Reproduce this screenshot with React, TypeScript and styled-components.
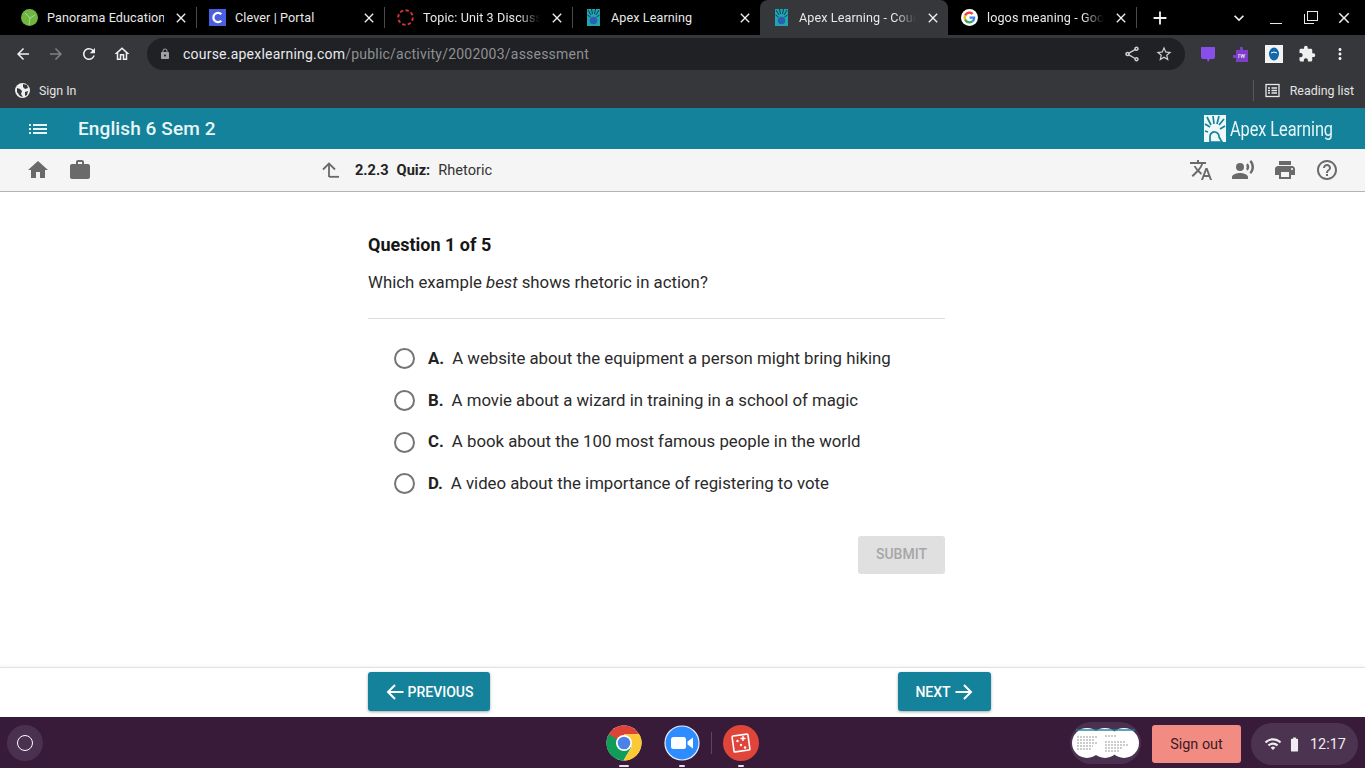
import React from "react";
import styled, { createGlobalStyle } from "styled-components";
import {
  MdArrowBack, MdArrowForward, MdRefresh, MdOutlineHome, MdLock, MdOutlineShare, MdStarBorder,
  MdExtension, MdMoreVert, MdClose, MdAdd, MdExpandMore, MdHome, MdWork, MdTranslate,
  MdRecordVoiceOver, MdPrint, MdHelpOutline, MdList, MdWifi, MdBatteryStd,
} from "react-icons/md";

const Global = createGlobalStyle`
  html, body { margin: 0; padding: 0; background: #fff; }
  * { box-sizing: border-box; }
  body { font-family: Roboto, "Liberation Sans", sans-serif; }
`;

const Page = styled.div`
  width: 1365px; height: 768px; display: flex; flex-direction: column; overflow: hidden;
`;

/* ---------- tab strip ---------- */
const TabStrip = styled.div`
  height: 35px; background: #000; display: flex; align-items: stretch; padding-left: 8px; color: #fff; flex: none;
`;
const Tab = styled.div<{ $active?: boolean; $sep?: boolean }>`
  width: 188px; height: 35px; display: flex; align-items: center; padding: 0 7px 0 13px; gap: 9px; position: relative;
  background: ${(p) => (p.$active ? "#36373a" : "transparent")};
  border-radius: ${(p) => (p.$active ? "8px 8px 0 0" : "0")};
  &::after {
    content: ""; display: ${(p) => (p.$sep ? "block" : "none")};
    position: absolute; right: -1px; top: 7px; width: 1px; height: 21px; background: #4a4a4c;
  }
`;
const FavSlot = styled.span`
  width: 17px; height: 17px; flex: none; display: block;
  svg { display: block; }
`;
const TabTitle = styled.span<{ $fade?: boolean }>`
  flex: 1; font-size: 12.6px; color: #e8e8e8; white-space: nowrap; overflow: hidden; letter-spacing: 0.1px;
  ${(p) => (p.$fade ? "mask-image: linear-gradient(90deg,#000 82%,transparent 100%);" : "")}
`;
const TabClose = styled(MdClose)`
  width: 16px; height: 16px; color: #f0f0f0; flex: none;
`;
const StripRight = styled.div`
  flex: 1; display: flex; align-items: center; padding-left: 13px; color: #f2f2f2;
`;
const NewTab = styled(MdAdd)`
  width: 22px; height: 22px; margin-right: 58px;
`;
const TabSearch = styled(MdExpandMore)`
  width: 20px; height: 20px; margin-right: 21px;
`;
const WinButtons = styled.div`
  display: flex; align-items: center; gap: 19px;
`;
const WinMin = styled.span`
  display: block; width: 12px; height: 1.5px; background: #e8e8e8; margin-top: 12px;
`;
const WinMax = styled.span`
  display: block; width: 13px; height: 13px; position: relative; margin-left: 3px;
  &::before { content: ""; position: absolute; left: 3px; top: 0; width: 9px; height: 8px; border: 1.4px solid #e8e8e8; }
  &::after { content: ""; position: absolute; left: 0; top: 3px; width: 9px; height: 9px; border-left: 1.4px solid #e8e8e8; border-bottom: 1.4px solid #e8e8e8; }
`;
const WinX = styled(MdClose)`
  width: 18px; height: 18px; margin-left: -1px; color: #eee;
`;

/* ---------- toolbar ---------- */
const Toolbar = styled.div`
  height: 37px; background: #36373a; display: flex; align-items: center; padding: 0 0 0 14px; flex: none;
`;
const NavIcon = styled.span<{ $dim?: boolean }>`
  width: 18px; height: 18px; margin-right: 15px; color: ${(p) => (p.$dim ? "#808185" : "#f0f0f0")}; display: flex;
  svg { width: 18px; height: 18px; }
`;
const Omnibox = styled.div`
  width: 1038px; height: 32px; margin-left: 1px; margin-top: 1px; border-radius: 16px; background: #202124; display: flex; align-items: center; padding: 0 12px 0 12px;
`;
const LockIcon = styled(MdLock)`
  width: 12px; height: 12px; color: #a0a1a5; margin-right: 12px;
`;
const Url = styled.span`
  flex: 1; font-size: 14px; color: #e8eaed; letter-spacing: 0.22px;
  span { color: #8e9094; }
`;
const OmniIcon = styled.span`
  color: #d0d1d4; display: flex; margin-left: 14px;
  svg { width: 18px; height: 18px; }
`;
const ExtRow = styled.div`
  display: flex; align-items: center; gap: 15px; margin-left: 14px;
`;
const Ext = styled.span`
  width: 18px; height: 18px; display: flex; color: #f0f0f0;
  svg { width: 18px; height: 18px; display: block; }
`;

/* ---------- bookmarks ---------- */
const Bookmarks = styled.div`
  height: 36px; background: #36373a; display: flex; align-items: center; justify-content: space-between; padding: 0 11px 0 15px; flex: none; color: #e4e4e4; font-size: 12.4px;
`;
const BookItem = styled.div`
  display: flex; align-items: center; gap: 9px;
`;
const Reading = styled.div`
  display: flex; align-items: center; gap: 10px; border-left: 1px solid #58595c; height: 21px; padding-left: 11px;
`;

/* ---------- app header ---------- */
const AppBar = styled.div`
  height: 41px; background: #14829b; display: flex; align-items: center; justify-content: space-between; padding: 0 26px 0 26px; flex: none; color: #fff;
`;
const AppLeft = styled.div`
  display: flex; align-items: center; gap: 28px;
`;
const CourseTitle = styled.div`
  font-size: 19px; font-weight: 500; color: #e9f6f8; letter-spacing: 0.1px;
`;
const MenuIcon = styled(MdList)`
  width: 24px; height: 24px; color: #e8f3f6;
`;
const Logo = styled.div`
  display: flex; align-items: center; gap: 4px; color: #e6f5f7;
`;
const LogoText = styled.span`
  display: inline-block; width: 109px; font-size: 21px; white-space: nowrap; transform: scaleX(0.78); transform-origin: left center; letter-spacing: -0.1px;
`;

const SubBar = styled.div`
  height: 43px; background: #f5f5f5; display: flex; align-items: center; flex: none; padding: 0 26px; color: #6a6a6a;
  border-bottom: 1px solid #b5b5b5; box-shadow: 0 1px 2px rgba(0,0,0,.12);
`;
const SubIcons = styled.div`
  display: flex; align-items: center; gap: 18px;
`;
const SubIconSlot = styled.span`
  width: 24px; height: 24px; display: flex;
  svg { width: 24px; height: 24px; display: block; }
`;
const Crumb = styled.div`
  display: flex; align-items: center; margin-left: 228px; font-size: 14.6px; color: #222; flex: 1;
  svg { margin-right: 15px; }
  b { font-weight: 700; margin-right: 8px; }
  span { margin-left: 0; color: #333; }
`;

/* ---------- main ---------- */
const Main = styled.main`
  flex: 1; background: #fff; padding: 41px 0 0 368px;
`;
const Column = styled.div`
  width: 577px; display: flex; flex-direction: column;
`;
const QTitle = styled.h2`
  margin: 0; font-size: 18px; line-height: 24px; font-weight: 700; color: #161616;
`;
const Prompt = styled.p`
  margin: 13px 0 0; font-size: 16.8px; line-height: 24px; color: #2a2a2a; padding-bottom: 24px; border-bottom: 1px solid #dcdcdc;
  em { font-style: italic; }
`;
const Options = styled.div`
  display: flex; flex-direction: column; padding: 18px 0 0 26px;
`;
const Option = styled.label`
  height: 41.7px; display: flex; align-items: center; font-size: 16.8px; color: #2a2a2a;
  b { font-weight: 700; margin-left: 13px; margin-right: 8px; color: #222; }
`;
const Radio = styled.span`
  width: 21px; height: 21px; border-radius: 50%; border: 2px solid #757575; background: #fff; margin-top: 2px; flex: none;
`;
const SubmitRow = styled.div`
  display: flex; justify-content: flex-end; margin-top: 32px;
`;
const Submit = styled.button`
  width: 87px; height: 38px; border: 0; border-radius: 3px; background: #e0e0e0; color: #a6a6a6; font: 500 14px Roboto, sans-serif; padding: 0 0 2px;
`;

const Footer = styled.footer`
  height: 50px; flex: none; background: #fff; border-top: 1px solid #e2e2e2; box-shadow: 0 -1px 3px rgba(0,0,0,.05); padding: 4px 374px 0 368px; display: flex; justify-content: space-between; align-items: flex-start;
`;
const NavButton = styled.button<{ $w: number }>`
  width: ${(p) => p.$w}px; height: 39px; border: 0; border-radius: 3px; background: #14829b; color: #fff; font: 500 14px Roboto, sans-serif; display: flex; align-items: center; justify-content: center; gap: 3px; padding: 0; box-shadow: 0 1px 3px rgba(0,0,0,.35);
  svg { width: 20px; height: 20px; }
`;

/* ---------- shelf ---------- */
const Shelf = styled.div`
  height: 51px; flex: none; background: #371b38; display: grid; grid-template-columns: 1fr auto 1fr; align-items: center; padding: 0 7px 0 7px;
`;
const Launcher = styled.div`
  width: 36px; height: 36px; border-radius: 50%; background: #4a3150; display: flex; align-items: center; justify-content: center; justify-self: start;
  &::after { content: ""; width: 14px; height: 14px; border-radius: 50%; border: 1.7px solid #fff; }
`;
const Apps = styled.div`
  display: flex; align-items: center; position: relative;
`;
const AppIcon = styled.div<{ $mr: number; $bar: number }>`
  width: 36px; height: 36px; margin-right: ${(p) => p.$mr}px; position: relative;
  svg { display: block; }
  &::after { content: ""; position: absolute; left: 50%; bottom: -6px; width: ${(p) => p.$bar}px; height: 2px; margin-left: ${(p) => -p.$bar / 2}px; background: #e8e0e8; border-radius: 1px; }
`;
const ShelfDivider = styled.span`
  width: 1px; height: 22px; background: #5b4560; margin-right: 11px;
`;
const ShelfRight = styled.div`
  display: flex; align-items: center; justify-content: flex-end;
`;
const Thumbs = styled.div`
  width: 71px; height: 42px; border-radius: 21px; background: #4a3150; display: flex; align-items: center; justify-content: center; margin-right: 11px;
`;
const SignOut = styled.div`
  width: 89px; height: 38px; border-radius: 3px; background: #f28b82; color: #3c1a22; font-size: 14.4px; display: flex; align-items: center; justify-content: center; margin-right: 10px; margin-top: 3px;
`;
const Tray = styled.div`
  width: 107px; height: 42px; border-radius: 21px; background: #4c3450; color: #f1ecf1; display: flex; align-items: center; padding-left: 13px; font-size: 14.4px; margin-top: 3px;
`;

const ApexFav = () => (
  <svg width="17" height="17" viewBox="0 0 17 17">
    <rect x="2" y="0" width="13" height="17" fill="#1fa6b0" />
    <path d="M3 1l3 5M6.5 0l1 5M10.5 0l-1 5M14 1l-3 5M2.5 6l3 2M14.5 6l-3 2" stroke="#0f3a52" strokeWidth="1" />
    <circle cx="8.5" cy="11.5" r="3.8" fill="#2d5fb0" />
  </svg>
);

const GoogleG = () => (
  <svg width="17" height="17" viewBox="0 0 48 48">
    <circle cx="24" cy="24" r="24" fill="#fff" />
    <g transform="translate(7 7) scale(.71)">
      <path fill="#EA4335" d="M24 9.5c3.5 0 6.6 1.2 9.1 3.6l6.8-6.8C35.8 2.4 30.3 0 24 0 14.6 0 6.5 5.4 2.6 13.2l7.9 6.2C12.4 13.7 17.7 9.5 24 9.5z" />
      <path fill="#4285F4" d="M46.9 24.5c0-1.6-.1-3.1-.4-4.5H24v9h12.9c-.6 3-2.2 5.5-4.7 7.2l7.7 6c4.4-4.1 7-10.2 7-17.7z" />
      <path fill="#FBBC05" d="M10.5 28.6c-.5-1.4-.8-3-.8-4.6s.3-3.2.8-4.6l-7.9-6.2C.9 16.5 0 20.1 0 24s.9 7.5 2.6 10.8l7.9-6.2z" />
      <path fill="#34A853" d="M24 48c6.5 0 11.9-2.1 15.9-5.8l-7.7-6c-2.1 1.4-4.9 2.3-8.2 2.3-6.3 0-11.6-4.2-13.5-9.9l-7.9 6.2C6.5 42.6 14.6 48 24 48z" />
    </g>
  </svg>
);

const UpTurn = () => (
  <svg width="20" height="20" viewBox="0 0 20 20" fill="none" stroke="#6a6a6a" strokeWidth="1.8">
    <path d="M9 17V4" />
    <path d="M3 9.5L9 3.5l6 6" />
    <path d="M9 16.8h10" />
  </svg>
);

const BackArrow = () => (
  <svg viewBox="0 0 20 20" fill="none" stroke="#fff" strokeWidth="2">
    <path d="M18.5 10H3" /><path d="M10 3l-7 7 7 7" />
  </svg>
);
const NextArrow = () => (
  <svg viewBox="0 0 20 20" fill="none" stroke="#fff" strokeWidth="2">
    <path d="M1.5 10H17" /><path d="M10 3l7 7-7 7" />
  </svg>
);

const tabs = [
  { title: "Panorama Education", fav: (
    <svg width="17" height="17" viewBox="0 0 17 17"><circle cx="8.5" cy="8.5" r="8.5" fill="#6fb53f" /><path d="M9 9L4 4M9 9l5-3M9 9l-1 7" stroke="#a9d78c" strokeWidth="1" /></svg>
  ) },
  { title: "Clever | Portal", fav: (
    <svg width="17" height="17" viewBox="0 0 17 17"><rect width="17" height="17" fill="#4a5fe0" /><path d="M12.3 5.3A4.6 4.6 0 1 0 12.3 11.7" fill="none" stroke="#fff" strokeWidth="2.2" /></svg>
  ) },
  { title: "Topic: Unit 3 Discussi", fade: true, fav: (
    <svg width="17" height="17" viewBox="0 0 17 17"><circle cx="8.5" cy="8.5" r="7.3" fill="none" stroke="#d9343a" strokeWidth="1.9" strokeDasharray="3.4 2.3" /></svg>
  ) },
  { title: "Apex Learning", fav: <ApexFav /> },
  { title: "Apex Learning - Cours", fade: true, fav: <ApexFav />, active: true },
  { title: "logos meaning - Goog", fade: true, fav: <GoogleG /> },
];

const options = [
  ["A.", "A website about the equipment a person might bring hiking"],
  ["B.", "A movie about a wizard in training in a school of magic"],
  ["C.", "A book about the 100 most famous people in the world"],
  ["D.", "A video about the importance of registering to vote"],
];

export default function App() {
  return (
    <Page>
      <Global />
      <TabStrip>
        {tabs.map((t, i) => (
          <Tab key={t.title} $active={t.active} $sep={!t.active && i !== 3}>
            <FavSlot>{t.fav}</FavSlot>
            <TabTitle $fade={t.fade}>{t.title}</TabTitle>
            <TabClose />
          </Tab>
        ))}
        <StripRight>
          <NewTab />
          <TabSearch />
          <WinButtons>
            <WinMin />
            <WinMax />
            <WinX />
          </WinButtons>
        </StripRight>
      </TabStrip>

      <Toolbar>
        <NavIcon><MdArrowBack /></NavIcon>
        <NavIcon $dim><MdArrowForward /></NavIcon>
        <NavIcon><MdRefresh /></NavIcon>
        <NavIcon><MdOutlineHome /></NavIcon>
        <Omnibox>
          <LockIcon />
          <Url>course.apexlearning.com<span>/public/activity/2002003/assessment</span></Url>
          <OmniIcon><MdOutlineShare /></OmniIcon>
          <OmniIcon><MdStarBorder /></OmniIcon>
        </Omnibox>
        <ExtRow>
          <Ext>
            <svg viewBox="0 0 18 18"><path d="M2 2h14v10q0 2-2 2h-3l-2 3-1-3H4q-2 0-2-2z" fill="#8a4fe8" /></svg>
          </Ext>
          <Ext>
            <svg viewBox="0 0 18 18"><path d="M4 5h4V2h3v3h5v12H4v-4H1v-3h3z" fill="#7d3fc9" /><text x="6" y="13" fontSize="6.5" fontFamily="Roboto" fill="#fff">rw</text></svg>
          </Ext>
          <Ext>
            <svg viewBox="0 0 18 18"><rect width="18" height="18" fill="#f2f2f2" /><ellipse cx="9" cy="9" rx="5" ry="6.5" fill="#1268a8" /><path d="M6 8q3-2 6 0" stroke="#fff" fill="none" /></svg>
          </Ext>
          <Ext><MdExtension /></Ext>
          <Ext><MdMoreVert /></Ext>
        </ExtRow>
      </Toolbar>

      <Bookmarks>
        <BookItem>
          <svg width="15" height="15" viewBox="0 0 15 15"><circle cx="7.5" cy="7.5" r="7.5" fill="#eee" /><path d="M2 5l3 1 2 2-1 3 2 3-3-1-3-4zM8 1l4 1 1 3-3 1-2-2zM10 9l3-1-1 4-2 1z" fill="#36373a" /></svg>
          Sign In
        </BookItem>
        <Reading>
          <svg width="15" height="15" viewBox="0 0 15 15" fill="none" stroke="#e8e8e8" strokeWidth="1.3"><rect x="1" y="1.5" width="13" height="12" /><path d="M3 5h2M6.5 5H12M3 7.5h2M6.5 7.5H12M3 10h2M6.5 10H12" /></svg>
          Reading list
        </Reading>
      </Bookmarks>

      <AppBar>
        <AppLeft>
          <MenuIcon />
          <CourseTitle>English 6 Sem 2</CourseTitle>
        </AppLeft>
        <Logo>
          <svg width="22" height="27" viewBox="0 0 22 27">
            <rect width="22" height="27" fill="#eef8f9" />
            <path d="M3 2l4 8M9 1l1 8M15 1l-2 8M20 4l-5 6M1 9l5 3M21 11l-5 3M1 16l3 1" stroke="#14829b" strokeWidth="1.7" />
            <path d="M6 27v-6a4.5 4.5 0 1 1 9 1l3 5z" fill="none" stroke="#14829b" strokeWidth="1.7" />
          </svg>
          <LogoText>Apex Learning</LogoText>
        </Logo>
      </AppBar>

      <SubBar>
        <SubIcons>
          <SubIconSlot><MdHome /></SubIconSlot>
          <SubIconSlot><MdWork /></SubIconSlot>
        </SubIcons>
        <Crumb>
          <UpTurn />
          <b>2.2.3</b><b>Quiz:</b><span>Rhetoric</span>
        </Crumb>
        <SubIcons>
          <SubIconSlot><MdTranslate /></SubIconSlot>
          <SubIconSlot><MdRecordVoiceOver /></SubIconSlot>
          <SubIconSlot><MdPrint /></SubIconSlot>
          <SubIconSlot><MdHelpOutline /></SubIconSlot>
        </SubIcons>
      </SubBar>

      <Main>
        <Column>
          <QTitle>Question 1 of 5</QTitle>
          <Prompt>Which example <em>best</em> shows rhetoric in action?</Prompt>
          <Options>
            {options.map(([k, v]) => (
              <Option key={k}>
                <Radio />
                <b>{k}</b>
                {v}
              </Option>
            ))}
          </Options>
          <SubmitRow><Submit>SUBMIT</Submit></SubmitRow>
        </Column>
      </Main>

      <Footer>
        <NavButton $w={122}><BackArrow />PREVIOUS</NavButton>
        <NavButton $w={93}>NEXT<NextArrow /></NavButton>
      </Footer>

      <Shelf>
        <Launcher />
        <Apps>
          <AppIcon $mr={22} $bar={10}>
            <svg width="36" height="36" viewBox="0 0 36 36">
              <circle cx="18" cy="18" r="17.5" fill="#fff" />
              <path d="M18 .5A17.5 17.5 0 0 1 33.2 9.3L18 9.5z" fill="#db4437" />
              <path d="M18 .5A17.5 17.5 0 0 0 2.8 9.3l7.6 13.2L18 9.5z" fill="#db4437" />
              <path d="M2.8 9.3A17.5 17.5 0 0 0 17.5 35.5l7.7-13z" fill="#0f9d58" />
              <path d="M33.2 9.3H18l7.6 13.1-8.1 13.1A17.5 17.5 0 0 0 33.2 9.3z" fill="#fcc934" />
              <circle cx="18" cy="18" r="8" fill="#fff" />
              <circle cx="18" cy="18" r="6.3" fill="#4c82e8" />
            </svg>
          </AppIcon>
          <AppIcon $mr={11} $bar={6}>
            <svg width="36" height="36" viewBox="0 0 36 36">
              <circle cx="18" cy="18" r="17" fill="#2d8cff" stroke="#e8f0ff" strokeWidth="1.2" />
              <rect x="7" y="12" width="15" height="12" rx="2.5" fill="#fff" />
              <path d="M23.5 16.5l5.5-4v11l-5.5-4z" fill="#fff" />
            </svg>
          </AppIcon>
          <ShelfDivider />
          <AppIcon $mr={0} $bar={6}>
            <svg width="36" height="36" viewBox="0 0 36 36">
              <circle cx="18" cy="18" r="18" fill="#e0453a" />
              <rect x="10" y="10" width="16" height="16" rx="1" fill="none" stroke="#fff" strokeWidth="1.6" transform="rotate(-8 18 18)" />
              <path d="M20 11v5M17.5 13.5h5" stroke="#fff" strokeWidth="1.4" />
              <circle cx="14.5" cy="16" r="1.2" fill="#fff" /><circle cx="18" cy="20" r="1.2" fill="#fff" /><circle cx="22" cy="22.5" r="1.2" fill="#fff" />
            </svg>
          </AppIcon>
        </Apps>
        <ShelfRight>
          <Thumbs>
            <svg width="67" height="30" viewBox="0 0 67 30">
              <circle cx="15" cy="15" r="15" fill="#fff" /><circle cx="33" cy="15" r="15" fill="#fff" /><circle cx="52" cy="15" r="15" fill="#fff" />
              <rect x="4" y="1" width="59" height="2" fill="#14829b" opacity=".7" />
              <path d="M5 9h20M5 12h18M5 15h20M5 18h16M5 21h14M33 8h12M33 14h20M33 17h24M33 20h18M33 23h14" stroke="#9a9a9a" strokeWidth="1" strokeDasharray="2 1" />
            </svg>
          </Thumbs>
          <SignOut>Sign out</SignOut>
          <Tray>
            <MdWifi size={18} />
            <MdBatteryStd size={17} style={{ marginLeft: 4 }} />
            <span style={{ marginLeft: 7 }}>12:17</span>
          </Tray>
        </ShelfRight>
      </Shelf>
    </Page>
  );
}
